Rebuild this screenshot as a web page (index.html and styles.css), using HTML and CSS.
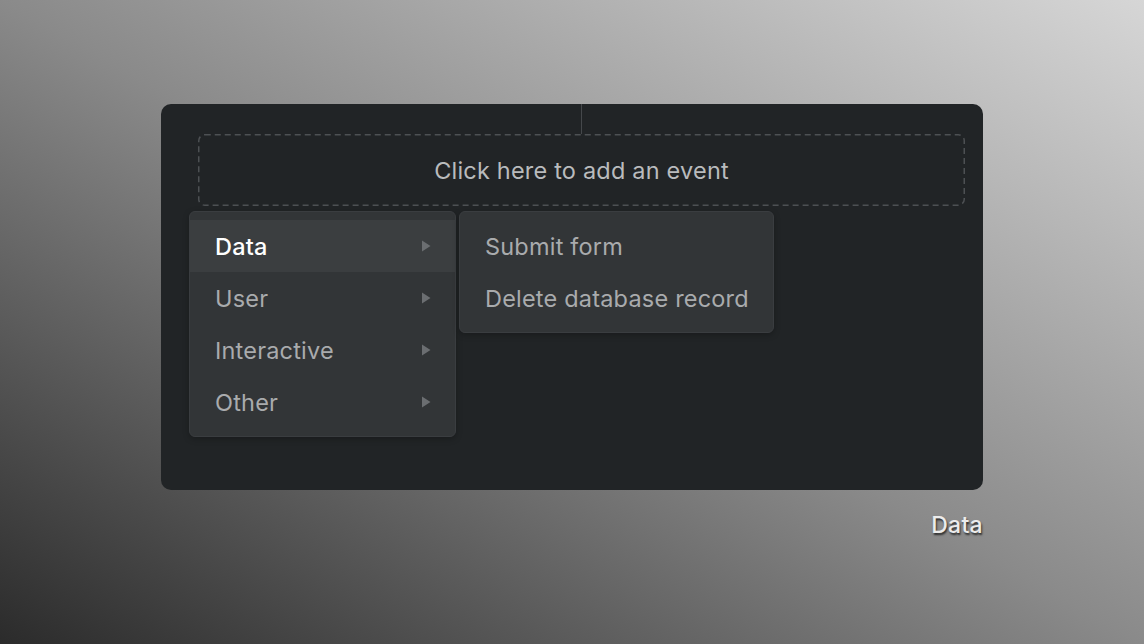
FILE: index.html
```html
<!DOCTYPE html>
<html>
<head>
<meta charset="utf-8">
<link rel="stylesheet" href="styles.css">
</head>
<body>
<div class="stage">
  <div class="card">
    <div class="slot">
      <div class="connector"></div>
      <div class="dropzone">
        <svg class="dash" width="767" height="72" viewBox="0 0 767 72"><rect x="0.75" y="0.75" width="765.5" height="70.5" rx="6" ry="6"/></svg>
        <span>Click here to add an event</span>
      </div>
      <div class="menus">
        <ul class="menu">
          <li class="item active"><span>Data</span><svg class="caret" width="10" height="12" viewBox="0 0 10 12"><path d="M1 0.5 L9.5 6 L1 11.5 Z"/></svg></li>
          <li class="item"><span>User</span><svg class="caret" width="10" height="12" viewBox="0 0 10 12"><path d="M1 0.5 L9.5 6 L1 11.5 Z"/></svg></li>
          <li class="item"><span>Interactive</span><svg class="caret" width="10" height="12" viewBox="0 0 10 12"><path d="M1 0.5 L9.5 6 L1 11.5 Z"/></svg></li>
          <li class="item"><span>Other</span><svg class="caret" width="10" height="12" viewBox="0 0 10 12"><path d="M1 0.5 L9.5 6 L1 11.5 Z"/></svg></li>
        </ul>
        <ul class="menu submenu">
          <li class="item"><span>Submit form</span></li>
          <li class="item"><span>Delete database record</span></li>
        </ul>
      </div>
    </div>
  </div>
  <div class="caption">Data</div>
</div>
</body>
</html>
```

FILE: styles.css
```css
html, body {
  margin: 0;
  padding: 0;
  width: 1144px;
  height: 644px;
  overflow: hidden;
}
body {
  background: linear-gradient(to top right, #2b2b2b 0%, #8a8a8a 50%, #d6d6d6 100%);
  font-family: Inter, "Noto Sans", "Liberation Sans", sans-serif;
}
.stage {
  padding: 104px 0 0 161px;
  width: 822px;
  display: flex;
  flex-direction: column;
}
.card {
  width: 822px;
  height: 386px;
  box-sizing: border-box;
  background: #212426;
  border-radius: 10px;
  padding: 0 18px 0 37px;
}
.slot {
  position: relative;
  display: flex;
  flex-direction: column;
}
.connector {
  width: 1px;
  height: 30px;
  background: #45484b;
  align-self: center;
}
.dropzone {
  position: relative;
  height: 72px;
  display: flex;
  align-items: center;
  justify-content: center;
  color: #b9bbbd;
  font-size: 23.5px;
  letter-spacing: 0.2px;
}
.dash {
  position: absolute;
  left: 0;
  top: 0;
}
.dash rect {
  fill: none;
  stroke: #4d5053;
  stroke-width: 1.5;
  stroke-dasharray: 6 4;
}
.menus {
  position: absolute;
  top: 107px;
  left: -9px;
  display: flex;
  gap: 3px;
  align-items: flex-start;
}
.menu {
  list-style: none;
  margin: 0;
  padding: 8px 0;
  width: 267px;
  box-sizing: border-box;
  background: #323537;
  border: 1px solid #3a3d40;
  border-radius: 6px;
  box-shadow: 0 2px 6px rgba(0,0,0,0.25);
}
.submenu {
  width: 315px;
}
.item {
  height: 52px;
  display: flex;
  align-items: center;
  justify-content: space-between;
  padding: 0 24px 0 25px;
  color: #a9abad;
  font-size: 23.5px;
  letter-spacing: 0.2px;
}
.item.active {
  background: #3b3e40;
  color: #ffffff;
  font-weight: 500;
}
.caret {
  fill: #6b6e71;
}
.caption {
  align-self: flex-end;
  margin-top: 21px;
  color: #ececec;
  font-size: 23px;
  font-weight: 500;
  letter-spacing: 0.3px;
  text-shadow: 1px 2px 2px rgba(0,0,0,0.7);
}
```
